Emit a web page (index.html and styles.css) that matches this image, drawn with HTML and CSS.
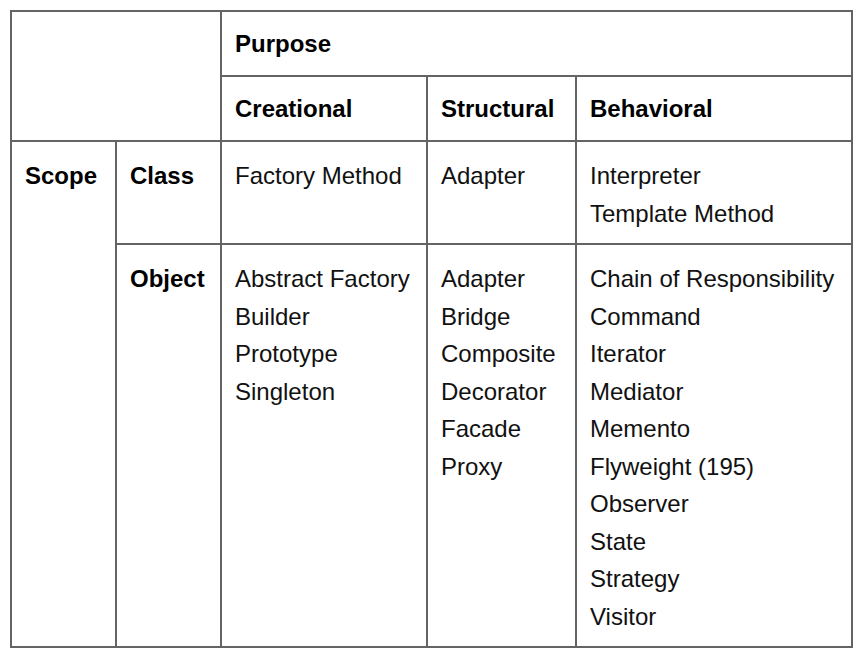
FILE: index.html
```html
<!DOCTYPE html>
<html>
<head>
<meta charset="utf-8">
<link rel="stylesheet" href="styles.css">
</head>
<body>
<table class="patterns">
  <colgroup>
    <col class="c-scope">
    <col class="c-kind">
    <col class="c-creational">
    <col class="c-structural">
    <col class="c-behavioral">
  </colgroup>
  <thead>
    <tr>
      <th class="blank" colspan="2" rowspan="2"></th>
      <th class="head" colspan="3">Purpose</th>
    </tr>
    <tr>
      <th class="head">Creational</th>
      <th class="head">Structural</th>
      <th class="head">Behavioral</th>
    </tr>
  </thead>
  <tbody>
    <tr>
      <th class="label" rowspan="2">Scope</th>
      <th class="label">Class</th>
      <td>Factory Method</td>
      <td>Adapter</td>
      <td>Interpreter<br>Template Method</td>
    </tr>
    <tr>
      <th class="label">Object</th>
      <td>Abstract Factory<br>Builder<br>Prototype<br>Singleton</td>
      <td>Adapter<br>Bridge<br>Composite<br>Decorator<br>Facade<br>Proxy</td>
      <td>Chain of Responsibility<br>Command<br>Iterator<br>Mediator<br>Memento<br>Flyweight (195)<br>Observer<br>State<br>Strategy<br>Visitor</td>
    </tr>
  </tbody>
</table>
</body>
</html>
```

FILE: styles.css
```css
html, body {
  margin: 0;
  padding: 0;
  background: #ffffff;
}

body {
  padding: 10px 0 0 10px;
  font-family: "Liberation Sans", Arial, sans-serif;
  color: #000000;
}

.patterns {
  border-collapse: collapse;
  table-layout: fixed;
  width: 841px;
  font-size: 24px;
  line-height: 37.5px;
}

.c-scope { width: 105px; }
.c-kind { width: 105px; }
.c-creational { width: 206px; }
.c-structural { width: 149px; }
.c-behavioral { width: 276px; }

.patterns th,
.patterns td {
  border: 2px solid #646464;
  text-align: left;
  vertical-align: top;
  padding: 15px 14px 11px 13px;
  white-space: nowrap;
}

.patterns th {
  font-weight: bold;
  color: #000000;
}

.patterns .head {
  height: 38px;
  line-height: 38px;
  padding: 13px 14px 12px 13px;
  vertical-align: middle;
}

.patterns td {
  font-weight: normal;
  color: #111111;
}
```
